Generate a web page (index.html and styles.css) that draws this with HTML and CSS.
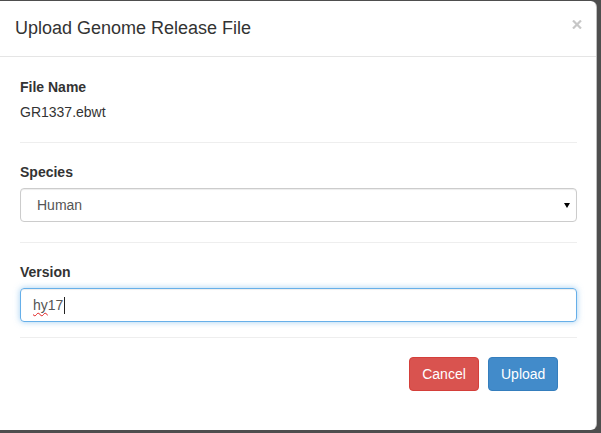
FILE: index.html
```html
<!DOCTYPE html>
<html>
<head>
<meta charset="utf-8">
<link rel="stylesheet" href="styles.css">
</head>
<body>
<div class="modal">
  <div class="modal-header">
    <h4 class="modal-title">Upload Genome Release File</h4>
    <svg class="close" width="10" height="9" viewBox="0 0 10 9"><path d="M1 0.5 L9 8.5 M9 0.5 L1 8.5" stroke="#000" stroke-opacity="0.22" stroke-width="2.2" fill="none"/></svg>
  </div>
  <div class="modal-body">
    <div class="group">
      <div class="label">File Name</div>
      <div class="static">GR1337.ebwt</div>
    </div>
    <hr class="sep sep-first">
    <div class="group">
      <div class="label label-field">Species</div>
      <div class="select">
        <span>Human</span>
        <span class="arrow"></span>
      </div>
    </div>
    <hr class="sep">
    <div class="group">
      <div class="label label-field">Version</div>
      <div class="input focus"><span class="misspelled">hy</span>17<span class="caret"></span></div>
    </div>
    <hr class="sep sep-last">
    <div class="footer">
      <button class="btn btn-danger">Cancel</button>
      <button class="btn btn-primary">Upload</button>
    </div>
  </div>
</div>
</body>
</html>
```

FILE: styles.css
```css
html, body {
  margin: 0;
  padding: 0;
}
body {
  background: #4e4e4e;
  padding-top: 1px;
  font-family: "Liberation Sans", Arial, Helvetica, sans-serif;
  font-size: 14px;
  color: #333;
  overflow: hidden;
  height: 433px;
  box-sizing: border-box;
}
.modal {
  width: 596px;
  height: 429px;
  background: #fff;
  border-right: 1px solid rgba(0,0,0,0.25);
  border-radius: 0 6px 6px 0;
  box-sizing: content-box;
}
.modal-header {
  display: flex;
  justify-content: space-between;
  align-items: flex-start;
  padding: 17px 14px 17px 15px;
  border-bottom: 1px solid #e5e5e5;
}
.modal-title {
  margin: 0;
  font-size: 18px;
  font-weight: normal;
  line-height: 21px;
  color: #333;
}
.close {
  display: block;
  margin-top: 2px;
}
.modal-body {
  padding: 20px 19px 0 20px;
}
.label {
  font-weight: bold;
  line-height: 20px;
  margin-bottom: 5px;
}
.label-field {
  margin-bottom: 6px;
}
.static {
  line-height: 20px;
}
.sep {
  border: 0;
  border-top: 1px solid #eee;
  margin: 20px 0 19px;
  height: 0;
}
.sep-last {
  margin: 15px 0 19px;
}
.select, .input {
  height: 34px;
  box-sizing: border-box;
  border: 1px solid #ccc;
  border-radius: 4px;
  box-shadow: inset 0 1px 1px rgba(0,0,0,0.075);
  color: #555;
  line-height: 20px;
  display: flex;
  align-items: center;
}
.select {
  padding: 0 6px 0 16px;
  justify-content: space-between;
}
.arrow {
  width: 0;
  height: 0;
  border-left: 3px solid transparent;
  border-right: 3px solid transparent;
  border-top: 5px solid #000;
  margin-top: 1px;
}
.input {
  padding: 0 12px;
}
.input.focus {
  border-color: #66afe9;
  box-shadow: inset 0 1px 1px rgba(0,0,0,0.075), 0 0 6px rgba(102,175,233,0.6);
}
.misspelled {
  text-decoration: underline wavy #e02020;
  text-decoration-thickness: 1px;
  text-underline-offset: 2px;
  text-decoration-skip-ink: none;
}
.caret {
  display: inline-block;
  width: 1px;
  height: 17px;
  background: #222;
  margin-left: 1px;
}
.footer {
  display: flex;
  justify-content: flex-end;
  gap: 9px;
  padding-right: 19px;
}
.btn {
  font-family: inherit;
  font-size: 14px;
  line-height: 20px;
  height: 34px;
  padding: 6px 12px;
  border: 1px solid transparent;
  border-radius: 4px;
  color: #fff;
  box-sizing: border-box;
}
.btn-danger {
  background: #d9534f;
  border-color: #d43f3a;
  width: 70px;
}
.btn-primary {
  background: #428bca;
  border-color: #357ebd;
  width: 70px;
}
```
